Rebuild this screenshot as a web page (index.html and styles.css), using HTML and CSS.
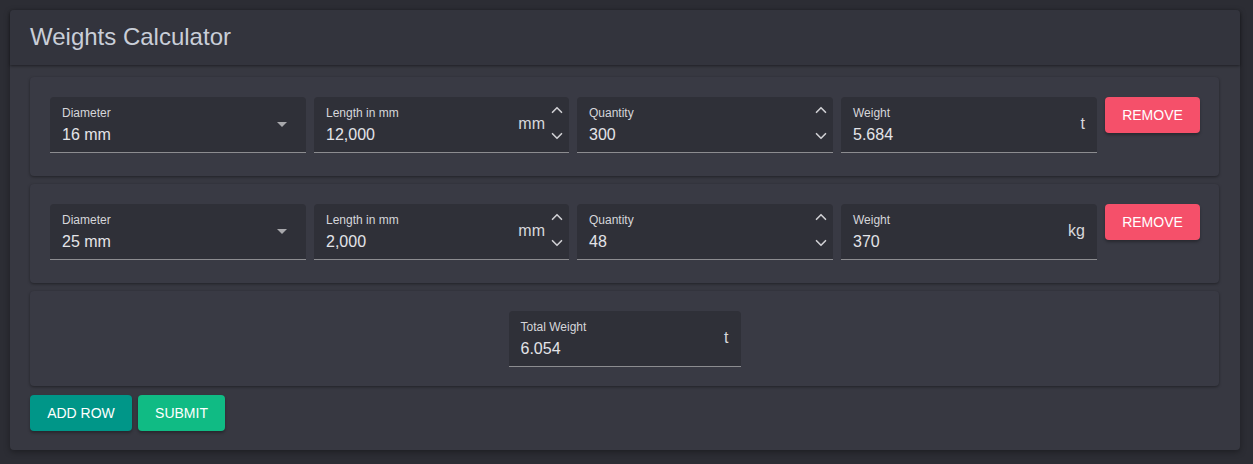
FILE: index.html
```html
<!DOCTYPE html>
<html lang="en">
<head>
  <meta charset="UTF-8" />
  <title>Weights Calculator</title>
  <link rel="stylesheet" href="styles.css">
</head>
<body>
  <div class="card">
    <div class="card-header">
      <h1>Weights Calculator</h1>
    </div>

    <div class="card-body">
      <!-- row 1 -->
      <div class="row">
        <div class="field select">
          <label>Diameter</label>
          <div class="value">16 mm</div>
          <span class="caret"></span>
        </div>
        <div class="field">
          <label>Length in mm</label>
          <div class="value">12,000</div>
          <span class="suffix">mm</span>
          <div class="spin">
            <svg viewBox="0 0 24 24"><path d="M6 15l6-6 6 6"/></svg>
            <svg viewBox="0 0 24 24"><path d="M6 9l6 6 6-6"/></svg>
          </div>
        </div>
        <div class="field">
          <label>Quantity</label>
          <div class="value">300</div>
          <div class="spin">
            <svg viewBox="0 0 24 24"><path d="M6 15l6-6 6 6"/></svg>
            <svg viewBox="0 0 24 24"><path d="M6 9l6 6 6-6"/></svg>
          </div>
        </div>
        <div class="field">
          <label>Weight</label>
          <div class="value">5.684</div>
          <span class="suffix unit">t</span>
        </div>
        <button class="btn btn-remove">Remove</button>
      </div>

      <!-- row 2 -->
      <div class="row">
        <div class="field select">
          <label>Diameter</label>
          <div class="value">25 mm</div>
          <span class="caret"></span>
        </div>
        <div class="field">
          <label>Length in mm</label>
          <div class="value">2,000</div>
          <span class="suffix">mm</span>
          <div class="spin">
            <svg viewBox="0 0 24 24"><path d="M6 15l6-6 6 6"/></svg>
            <svg viewBox="0 0 24 24"><path d="M6 9l6 6 6-6"/></svg>
          </div>
        </div>
        <div class="field">
          <label>Quantity</label>
          <div class="value">48</div>
          <div class="spin">
            <svg viewBox="0 0 24 24"><path d="M6 15l6-6 6 6"/></svg>
            <svg viewBox="0 0 24 24"><path d="M6 9l6 6 6-6"/></svg>
          </div>
        </div>
        <div class="field">
          <label>Weight</label>
          <div class="value">370</div>
          <span class="suffix unit">kg</span>
        </div>
        <button class="btn btn-remove">Remove</button>
      </div>

      <!-- total -->
      <div class="row total-row">
        <div class="field total">
          <label>Total Weight</label>
          <div class="value">6.054</div>
          <span class="suffix unit">t</span>
        </div>
      </div>

      <div class="actions">
        <button class="btn btn-add">Add Row</button>
        <button class="btn btn-submit">Submit</button>
      </div>
    </div>
  </div>
</body>
</html>
```

FILE: styles.css
```css
* {
  margin: 0;
  padding: 0;
  box-sizing: border-box;
  font-family: 'Liberation Sans', Arial, sans-serif;
}

body {
  background: #2c2d34;
  padding: 10px 13px 10px 10px;
  color: #e2e2e6;
}

.card {
  background: #373841;
  border-radius: 4px;
  box-shadow: 0 2px 6px rgba(0,0,0,.35);
  padding-bottom: 19px;
}

.card-header {
  height: 55px;
  background: #33343d;
  border-radius: 4px 4px 0 0;
  box-shadow: 0 1px 3px rgba(0,0,0,.45);
  display: flex;
  align-items: center;
  padding: 0 20px;
}

.card-header h1 {
  font-size: 24px;
  font-weight: normal;
  color: #c9ced8;
  margin-top: -2px;
}

.card-body {
  padding: 12px 21px 0 20px;
  display: flex;
  flex-direction: column;
  gap: 8px;
}

.row {
  background: #393a44;
  border-radius: 4px;
  box-shadow: 0 1px 3px rgba(0,0,0,.4);
  padding: 20px 20px 23px 20px;
  display: grid;
  grid-template-columns: 256px 255px 256px 256px 95px;
  column-gap: 8px;
  align-items: start;
}

.total-row {
  display: flex;
  justify-content: center;
  padding: 20px 0 19px 0;
}

.field {
  position: relative;
  height: 56px;
  background: #2f3038;
  border-radius: 4px 4px 0 0;
  border-bottom: 1px solid #8c8c90;
  padding: 8px 12px 0 12px;
}

.field.total {
  width: 232px;
}

.field label {
  display: block;
  font-size: 12px;
  line-height: 16px;
  color: #d6d6da;
}

.field .value {
  font-size: 16px;
  line-height: 22px;
  margin-top: 3px;
  color: #e4e4e8;
}

.caret {
  position: absolute;
  right: 19px;
  top: 25px;
  width: 0;
  height: 0;
  border-left: 5px solid transparent;
  border-right: 5px solid transparent;
  border-top: 5px solid #a8a8ac;
}

.suffix {
  position: absolute;
  right: 24px;
  top: 18px;
  font-size: 16px;
  color: #d8d8dc;
}

.suffix.unit {
  right: 12px;
}

.spin {
  position: absolute;
  right: 3px;
  top: 4px;
  display: flex;
  flex-direction: column;
  gap: 8px;
}

.spin svg {
  width: 18px;
  height: 18px;
  fill: none;
  stroke: #cfcfd3;
  stroke-width: 2.2;
  stroke-linecap: round;
  stroke-linejoin: round;
}

.btn {
  border: none;
  border-radius: 4px;
  color: #fff;
  font-size: 14px;
  text-transform: uppercase;
  height: 36px;
  padding: 0 16px;
  cursor: pointer;
  box-shadow: 0 2px 3px rgba(0,0,0,.3);
}

.btn-remove {
  background: #f5506a;
  width: 95px;
  padding: 0;
}

.actions {
  display: flex;
  gap: 6px;
  margin-top: 1px;
}

.btn-add {
  background: #009688;
  width: 102px;
  padding: 0;
}

.btn-submit {
  background: #10bb84;
  width: 87px;
  padding: 0;
}
```
